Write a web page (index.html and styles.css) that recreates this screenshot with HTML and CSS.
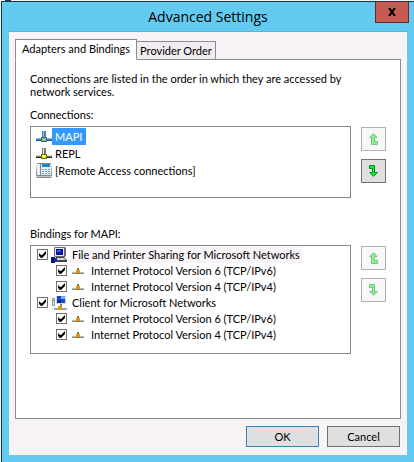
FILE: index.html
```html
<!DOCTYPE html>
<html lang="en">
<head>
    <meta charset="utf-8">
    <title>Advanced Settings</title>
    <link rel="stylesheet" href="styles.css">
</head>

<body>
    <!-- shared icons -->
    <svg class="sprite" aria-hidden="true">
        <symbol id="arrow-up" viewBox="0 0 9 12">
            <path d="M4.500 .7 8 4.500H5.500V8.500H8.500V11.500H2.500V4.500H.7Z" fill="#0cf52c" stroke="#078a17"/>
        </symbol>
        <symbol id="arrow-down" viewBox="0 0 9 12">
            <path d="M.5 .5H5.500V7.500H8.300L4.500 11.300 .7 7.500H3.500V3.500H.5Z" fill="#0cf52c" stroke="#078a17"/>
        </symbol>
        <symbol id="protocol" viewBox="0 0 12 8">
            <path d="M0 5h12v2H0z" fill="#b9bdc0"/>
            <path d="M0 6h12v1H0z" fill="#83898c"/>
            <path d="M5 1h2v3H5z" fill="#8a7440"/>
            <path d="M4 3h4v4H4z" fill="#d99a1c"/>
            <path d="M4 6h4v1H4z" fill="#a66b08"/>
        </symbol>
    </svg>

    <div class="window">
        <header class="titlebar">
            <h1>Advanced Settings</h1>
            <button class="close" aria-label="Close">
                <svg width="8" height="8" viewBox="0 0 8 8"><path d="M0 0H2.500L4 2.500 5.500 0H8L5.300 4 8 8H5.500L4 5.500 2.500 8H0L2.700 4Z"/></svg>
            </button>
        </header>

        <main class="client">
            <div class="tabs" role="tablist">
                <button class="tab active" role="tab" aria-selected="true">Adapters and Bindings</button>
                <button class="tab" role="tab" aria-selected="false">Provider Order</button>
            </div>

            <section class="panel" role="tabpanel">
                <p class="intro">Connections are listed in the order in which they are accessed by network services.</p>

                <h2 id="connections">Connections:</h2>
                <div class="group">
                    <ul class="list connections" aria-labelledby="connections">
                        <li class="selected">
                            <svg width="16" height="11" viewBox="0 0 16 11">
                                <path d="M6 0h4v7H6zM0 7h16v3H0z" fill="#4782b5"/>
                                <path d="M7 0h1v7H7zM0 7h16v1H0z" fill="#94bddd"/>
                                <path d="M0 9h16v1H0z" fill="#24598a"/>
                                <path d="M5 6h6v5H5z" fill="#346f8d"/>
                                <path d="M6 7h4v3H6z" fill="#9abf83"/>
                            </svg>
                            <span>MAPI</span>
                        </li>
                        <li>
                            <svg width="16" height="11" viewBox="0 0 16 11">
                                <path d="M6 0h4v7H6zM0 7h16v3H0z" fill="#777"/>
                                <path d="M7 0h1v7H7zM0 7h16v1H0z" fill="#ddd"/>
                                <path d="M0 9h16v1H0z" fill="#222"/>
                                <path d="M5 6h6v5H5z" fill="#777100"/>
                                <path d="M6 7h4v3H6z" fill="#f5ee16"/>
                                <path d="M7 7h2v2H7z" fill="#fffcb0"/>
                            </svg>
                            <span>REPL</span>
                        </li>
                        <li>
                            <svg width="16" height="15" viewBox="0 0 16 15">
                                <path d="M1 0h14l1 12-1 3H1l-1-3z" fill="#7e878d"/>
                                <path d="M1 1h3v11H1zM5 1h10v11H5z" fill="#e6edf0"/>
                                <path d="M2 1h1v11H2z" fill="#fff"/>
                                <path d="M6 1h8v3H6z" fill="#2187bd"/>
                                <path d="M6 6h2v1H6zM9 6h2v1H9zM12 6h2v1h-2zM6 8h2v1H6zM9 8h2v1H9zM12 8h2v1h-2zM6 10h2v1H6zM9 10h2v1H9zM12 10h2v1h-2z" fill="#62a3c4"/>
                                <path d="M1 13h14v1H1z" fill="#c1c8cc"/>
                            </svg>
                            <span>[Remote Access connections]</span>
                        </li>
                    </ul>
                    <div class="order">
                        <button disabled aria-label="Move connection up"><svg><use href="#arrow-up"/></svg></button>
                        <button aria-label="Move connection down"><svg><use href="#arrow-down"/></svg></button>
                    </div>
                </div>

                <h2 id="bindings">Bindings for MAPI:</h2>
                <div class="group">
                    <ul class="list bindings" aria-labelledby="bindings">
                        <li class="current">
                            <input type="checkbox" id="sharing" checked>
                            <label for="sharing">
                                <svg width="16" height="16" viewBox="0 0 16 16">
                                    <path d="M4 0h10l1 1v8l-1 1H4L3 9V1z" fill="#68686e"/>
                                    <path d="M4 1h9v8H4z" fill="#e8e8e8"/>
                                    <path d="M5 2h7v6H5z" fill="#0710a0"/>
                                    <path d="M6 3h4v2H6z" fill="#3554ef"/>
                                    <path d="M5 10h8l3 3v2H5z" fill="#444"/>
                                    <path d="M5 11h8l2 2H5z" fill="#d5d5d8"/>
                                    <path d="M0 10h4v6H0z" fill="#071278"/>
                                    <path d="M4 11h2v4H4z" fill="#1930b8"/>
                                </svg>
                                <span>File and Printer Sharing for Microsoft Networks</span>
                            </label>
                        </li>
                        <li class="sub">
                            <input type="checkbox" id="sharing6" checked>
                            <label for="sharing6"><svg width="12" height="8"><use href="#protocol"/></svg><span>Internet Protocol Version 6 (TCP/IPv6)</span></label>
                        </li>
                        <li class="sub">
                            <input type="checkbox" id="sharing4" checked>
                            <label for="sharing4"><svg width="12" height="8"><use href="#protocol"/></svg><span>Internet Protocol Version 4 (TCP/IPv4)</span></label>
                        </li>
                        <li>
                            <input type="checkbox" id="client" checked>
                            <label for="client">
                                <svg width="16" height="16" viewBox="0 0 16 16">
                                    <path d="M1 3h3v8H1z" fill="#969c9e"/>
                                    <path d="M2 4h1v6H2z" fill="#e1e7df"/>
                                    <path d="M2 5h1v1H2z" fill="#35a830"/>
                                    <path d="M5 1h10v8H5z" fill="#d2dce5"/>
                                    <path d="M6 1h8v7H6z" fill="#1748cf"/>
                                    <path d="M10 1h4v3h-4z" fill="#75a9ff"/>
                                    <path d="M6 5h4v3H6z" fill="#0a268d"/>
                                    <path d="M9 9h2v3H9z" fill="#888"/>
                                    <path d="M3 13h13v2H3z" fill="#a2a6a8"/>
                                    <path d="M7 11h4v4H7z" fill="#d99a1c"/>
                                </svg>
                                <span>Client for Microsoft Networks</span>
                            </label>
                        </li>
                        <li class="sub">
                            <input type="checkbox" id="client6" checked>
                            <label for="client6"><svg width="12" height="8"><use href="#protocol"/></svg><span>Internet Protocol Version 6 (TCP/IPv6)</span></label>
                        </li>
                        <li class="sub">
                            <input type="checkbox" id="client4" checked>
                            <label for="client4"><svg width="12" height="8"><use href="#protocol"/></svg><span>Internet Protocol Version 4 (TCP/IPv4)</span></label>
                        </li>
                    </ul>
                    <div class="order">
                        <button disabled aria-label="Move binding up"><svg><use href="#arrow-up"/></svg></button>
                        <button disabled aria-label="Move binding down"><svg><use href="#arrow-down"/></svg></button>
                    </div>
                </div>
            </section>

            <footer class="actions">
                <button class="default">OK</button>
                <button>Cancel</button>
            </footer>
        </main>
    </div>
</body>
</html>
```
FILE: styles.css
```css
* {
    box-sizing: border-box;
}

body {
    margin: 0;
    padding: 1px 0 0 1px;
    background: #eef3f8;
    font: 11px/13px Lato, sans-serif;
    color: #000;
}

/* corner of the window behind */
body::before {
    content: "";
    position: absolute;
    top: 0;
    left: 5px;
    width: 6px;
    height: 1px;
    background: #1c3f66;
}

button {
    font: inherit;
    color: inherit;
    padding: 0;
}

h1, h2, p, ul {
    margin: 0;
    padding: 0;
    font-weight: normal;
}

svg {
    display: block;
    flex: none;
}

.sprite {
    position: absolute;
    width: 0;
    height: 0;
}

.window {
    display: flex;
    flex-direction: column;
    min-height: calc(100vh - 1px);
    padding: 0 7px 7px;
    background: #63cbf0;
    border-top: 1px solid #1c3540;
    border-left: 1px solid #1c3540;
}

/* title bar */
.titlebar {
    display: grid;
    grid-template-columns: 1fr auto 1fr;
    height: 29px;
}

.titlebar h1 {
    grid-column: 2;
    font: 14px/29px "Open Sans", sans-serif;
}

.close {
    display: flex;
    align-items: center;
    justify-content: center;
    justify-self: end;
    width: 34px;
    height: 21px;
    margin-right: -2px;
    background: #c75a52;
    border: 1px solid #5b302f;
    border-top: none;
}

/* client area */
.client {
    flex: 1;
    display: flex;
    flex-direction: column;
    padding: 7px 6px 8px;
    background: #f7f3f7;
    border-top: 1px solid #5bb5da;
}

.tabs {
    display: flex;
    align-items: flex-end;
    margin-bottom: -1px;
}

.tab {
    height: 19px;
    padding: 0 3px;
    background: #f0ecf0;
    border: 1px solid #8a8a92;
    border-left: none;
}

.tab.active {
    position: relative;
    height: 21px;
    padding: 0 6px 2px;
    background: #fff;
    border-left: 1px solid #8a8a92;
    border-bottom-color: #fff;
}

.panel {
    flex: 1;
    padding: 12px 14px;
    background: #fff;
    border: 1px solid #8a8a92;
}

.intro {
    max-width: 320px;
    margin-bottom: 10px;
}

.panel h2 {
    font-size: 11px;
    margin-bottom: 5px;
}

.group {
    display: flex;
    gap: 10px;
}

.group + h2 {
    margin-top: 29px;
}

/* list boxes */
.list {
    flex: 1;
    list-style: none;
    border: 1px solid #848494;
}

.list li, .list label {
    display: flex;
    align-items: center;
}

.connections {
    min-height: 72px;
    padding: 1px 5px;
}

.connections li {
    height: 17px;
}

.connections span {
    padding: 2px 4px 2px 3px;
}

.selected span {
    background: #3399ff;
    color: #fff;
}

.bindings {
    min-height: 109px;
    padding: 1px 6px;
}

.bindings li {
    height: 16px;
    gap: 3px;
}

.bindings label {
    gap: 3px;
}

.bindings span {
    padding: 1px 2px 2px;
}

.current span {
    background: #f7f3f7;
}

.bindings .sub {
    padding-left: 19px;
    gap: 5px;
}

.sub label {
    gap: 5px;
}

input[type="checkbox"] {
    appearance: none;
    width: 11px;
    height: 11px;
    margin: 0 0 1px;
    background: #fff;
    border: 1px solid #707070;
}

input:checked::before {
    content: "";
    display: block;
    width: 7px;
    height: 7px;
    margin: 1px;
    background: #000;
    clip-path: polygon(0 2px, 2px 4px, 3px 4px, 7px 0, 7px 3px, 3px 7px, 2px 7px, 0 5px);
}

/* up and down buttons */
.order {
    display: flex;
    flex-direction: column;
    gap: 8px;
    padding-top: 1px;
}

.order button {
    display: flex;
    align-items: center;
    justify-content: center;
    width: 25px;
    height: 24px;
    background: #dfdfdf;
    border: 1px solid #707070;
}

.order button:disabled {
    background: #f7f7f7;
    border-color: #adb2b5;
}

.order svg {
    width: 9px;
    height: 12px;
}

.order :disabled svg {
    opacity: 0.5;
}

/* bottom buttons */
.actions {
    display: flex;
    justify-content: flex-end;
    gap: 8px;
    padding: 7px 1px 0 0;
}

.actions button {
    width: 73px;
    height: 21px;
    background: #dfdfdf;
    border: 1px solid #707070;
}

.actions .default {
    border-color: #3882b8;
}
```
